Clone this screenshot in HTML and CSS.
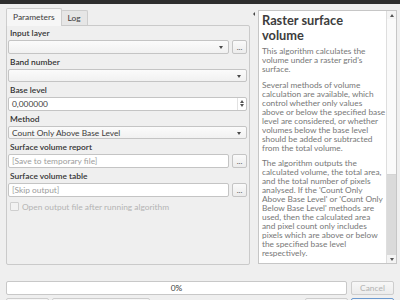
FILE: index.html
```html
<!DOCTYPE html>
<html lang="en">
<head>
  <meta charset="UTF-8" />
  <title>Raster surface volume</title>
  <link rel="stylesheet" href="styles.css">
</head>
<body>
  <div class="titlebar"></div>
  <div class="main">
    <div class="left">
      <div class="tabs">
        <span class="tab active">Parameters</span>
        <span class="tab">Log</span>
      </div>
      <div class="frame">
        <div class="lbl first">Input layer</div>
        <div class="row">
          <div class="combo"></div>
          <button class="dots">...</button>
        </div>

        <div class="lbl">Band number</div>
        <div class="row">
          <div class="combo"></div>
        </div>

        <div class="lbl">Base level</div>
        <div class="row">
          <div class="spin">
            <span>0,000000</span>
            <span class="spin-arrows"><i class="up"></i><i class="down"></i></span>
          </div>
        </div>

        <div class="lbl">Method</div>
        <div class="row">
          <div class="combo">Count Only Above Base Level</div>
        </div>

        <div class="lbl">Surface volume report</div>
        <div class="row">
          <div class="edit placeholder">[Save to temporary file]</div>
          <button class="dots">...</button>
        </div>

        <div class="lbl">Surface volume table</div>
        <div class="row">
          <div class="edit placeholder">[Skip output]</div>
          <button class="dots">...</button>
        </div>

        <div class="check disabled"><span class="box"></span>Open output file after running algorithm</div>
      </div>
    </div>

    <div class="splitter"><span class="handle"></span></div>

    <div class="help">
      <div class="help-text">
        <h2>Raster surface<br>volume</h2>
        <p>This algorithm calculates the<br>volume under a raster grid's<br>surface.</p>
        <p>Several methods of volume<br>calculation are available, which<br>control whether only values<br>above or below the specified base<br>level are considered, or whether<br>volumes below the base level<br>should be added or subtracted<br>from the total volume.</p>
        <p>The algorithm outputs the<br>calculated volume, the total area,<br>and the total number of pixels<br>analysed. If the 'Count Only<br>Above Base Level' or 'Count Only<br>Below Base Level' methods are<br>used, then the calculated area<br>and pixel count only includes<br>pixels which are above or below<br>the specified base level<br>respectively.</p>
      </div>
      <div class="scrollbar">
        <span class="sb-arrow"><i class="up"></i></span>
        <span class="sb-track"></span>
        <span class="sb-thumb"></span>
        <span class="sb-arrow"><i class="down"></i></span>
      </div>
    </div>
  </div>

  <div class="progress-row">
    <div class="progress">0%</div>
    <button class="btn" disabled>Cancel</button>
  </div>

  <div class="button-row">
    <button class="btn small"><span class="help-icon"></span></button>
    <button class="btn wide"></button>
    <span class="spacer"></span>
    <button class="btn"></button>
    <button class="btn default"><span class="run-icon"></span></button>
  </div>
</body>
</html>
```

FILE: styles.css
```css
body {
  margin: 0;
  width: 400px;
  height: 300px;
  overflow: hidden;
  background-color: #efefef;
  font-family: Lato, "Open Sans", sans-serif;
  font-size: 8.4px;
  color: #3c3c3c;
}
.titlebar {
  height: 4px;
  background-color: #2e2e2e;
}
.main {
  display: flex;
  height: 261px;
}
.left {
  width: 244px;
  margin-left: 6px;
  margin-top: 5px;
}
.tabs {
  display: flex;
  align-items: flex-end;
  height: 16px;
}
.tab {
  height: 14px;
  line-height: 14px;
  padding: 0 6px;
  background-color: #e6e6e6;
  border: 1px solid #cdcdcd;
  border-bottom: none;
  border-radius: 2px 2px 0 0;
  margin-left: -1px;
}
.tab.active {
  height: 17px;
  line-height: 16px;
  background-color: #f6f6f6;
  margin-left: 0;
  margin-bottom: -1px;
  position: relative;
  z-index: 1;
  padding: 0 6px;
}
.frame {
  height: 238px;
  border: 1px solid #cacaca;
  border-radius: 0 2px 2px 2px;
  padding: 0 2px 0 1px;
}
.lbl {
  height: 15px;
  line-height: 16px;
  padding-left: 2px;
  color: #333;
  font-weight: 600;
}
.lbl.first {
  margin-top: -1px;
}
.row {
  display: flex;
  gap: 3px;
  height: 13.6px;
}
.combo, .spin, .edit {
  flex: 1;
  box-sizing: border-box;
  height: 13.6px;
  line-height: 12px;
  border: 1px solid #c4c4c4;
  border-radius: 2px;
  padding-left: 3px;
  position: relative;
  white-space: nowrap;
}
.combo {
  background: linear-gradient(#fbfbfb, #f1f1f1);
}
.combo::after {
  content: "";
  position: absolute;
  right: 5px;
  top: 5px;
  border-left: 2.5px solid transparent;
  border-right: 2.5px solid transparent;
  border-top: 3px solid #4a4a4a;
}
.spin, .edit {
  background-color: #fff;
}
.spin {
  display: flex;
  justify-content: space-between;
}
.spin-arrows {
  width: 8px;
  display: flex;
  flex-direction: column;
  align-items: center;
  justify-content: center;
  gap: 1px;
  border-left: 1px solid #e2e2e2;
}
.up, .down {
  display: block;
  width: 0;
  height: 0;
  border-left: 2px solid transparent;
  border-right: 2px solid transparent;
}
.up {
  border-bottom: 3px solid #555;
}
.down {
  border-top: 3px solid #555;
}
.placeholder {
  color: #9d9d9d;
}
.dots {
  width: 15px;
  height: 14px;
  padding: 0;
  border: 1px solid #c4c4c4;
  border-radius: 2px;
  background: linear-gradient(#fafafa, #ececec);
  font-family: inherit;
  font-size: 8px;
  line-height: 10px;
  color: #555;
}
.check {
  display: flex;
  align-items: center;
  height: 12px;
  margin-top: 4px;
  padding-left: 2px;
  white-space: nowrap;
}
.check.disabled {
  color: #b4b4b4;
}
.box {
  width: 7px;
  height: 7px;
  border: 1px solid #cfcfcf;
  border-radius: 1px;
  background-color: #f2f2f2;
  margin-right: 3px;
}
.splitter {
  width: 8px;
  position: relative;
}
.handle {
  position: absolute;
  left: 3px;
  top: 8px;
  border-top: 2px solid transparent;
  border-bottom: 2px solid transparent;
  border-right: 2px solid #444;
}
.help {
  width: 139px;
  height: 254px;
  margin-top: 6px;
  box-sizing: border-box;
  border: 1px solid #c6c6c6;
  display: flex;
  background-color: #fff;
}
.help-text {
  flex: 1;
  padding: 2px 3px;
  overflow: hidden;
  white-space: nowrap;
}
.help-text h2 {
  margin: 0 0 4px;
  font-size: 12.8px;
  line-height: 15px;
  font-weight: bold;
  color: #3d3d3d;
}
.help-text p {
  margin: 0 0 6.5px;
  font-size: 8.3px;
  line-height: 9px;
  color: #777;
}
.scrollbar {
  width: 9px;
  display: flex;
  flex-direction: column;
  border-left: 1px solid #dedede;
  background-color: #f4f4f4;
}
.sb-arrow {
  height: 8px;
  display: flex;
  align-items: center;
  justify-content: center;
}
.sb-track {
  height: 155px;
  background-color: #fafafa;
  border-bottom: 1px solid #d4d4d4;
}
.sb-thumb {
  flex: 1;
  background-color: #dadada;
}
.progress-row {
  display: flex;
  gap: 4px;
  margin: 16px 6px 0 6px;
  height: 14px;
}
.progress {
  flex: 1;
  box-sizing: border-box;
  border: 1px solid #c8c8c8;
  border-radius: 2px;
  background-color: #fff;
  text-align: center;
  line-height: 12px;
  color: #3c3c3c;
}
.btn {
  width: 43px;
  height: 14px;
  padding: 0;
  border: 1px solid #cdcdcd;
  border-radius: 2px;
  background: linear-gradient(#f7f7f7, #ececec);
  font-family: inherit;
  font-size: 8.4px;
  color: #3c3c3c;
  position: relative;
}
.btn:disabled {
  color: #b2b2b2;
}
.button-row {
  display: flex;
  gap: 3px;
  margin: 3px 6px 0 6px;
}
.btn.small {
  width: 43px;
}
.btn.wide {
  width: 98px;
}
.spacer {
  flex: 1;
}
.button-row .btn {
  height: 16px;
}
.btn.default {
  border-color: #6c9ad0;
}
.help-icon, .run-icon {
  position: absolute;
  top: 1px;
  width: 6px;
  height: 6px;
  border-radius: 50%;
}
.help-icon {
  left: 10px;
  background-color: #4a78b8;
}
.run-icon {
  left: 13px;
  background-color: #5aa03c;
}
```
